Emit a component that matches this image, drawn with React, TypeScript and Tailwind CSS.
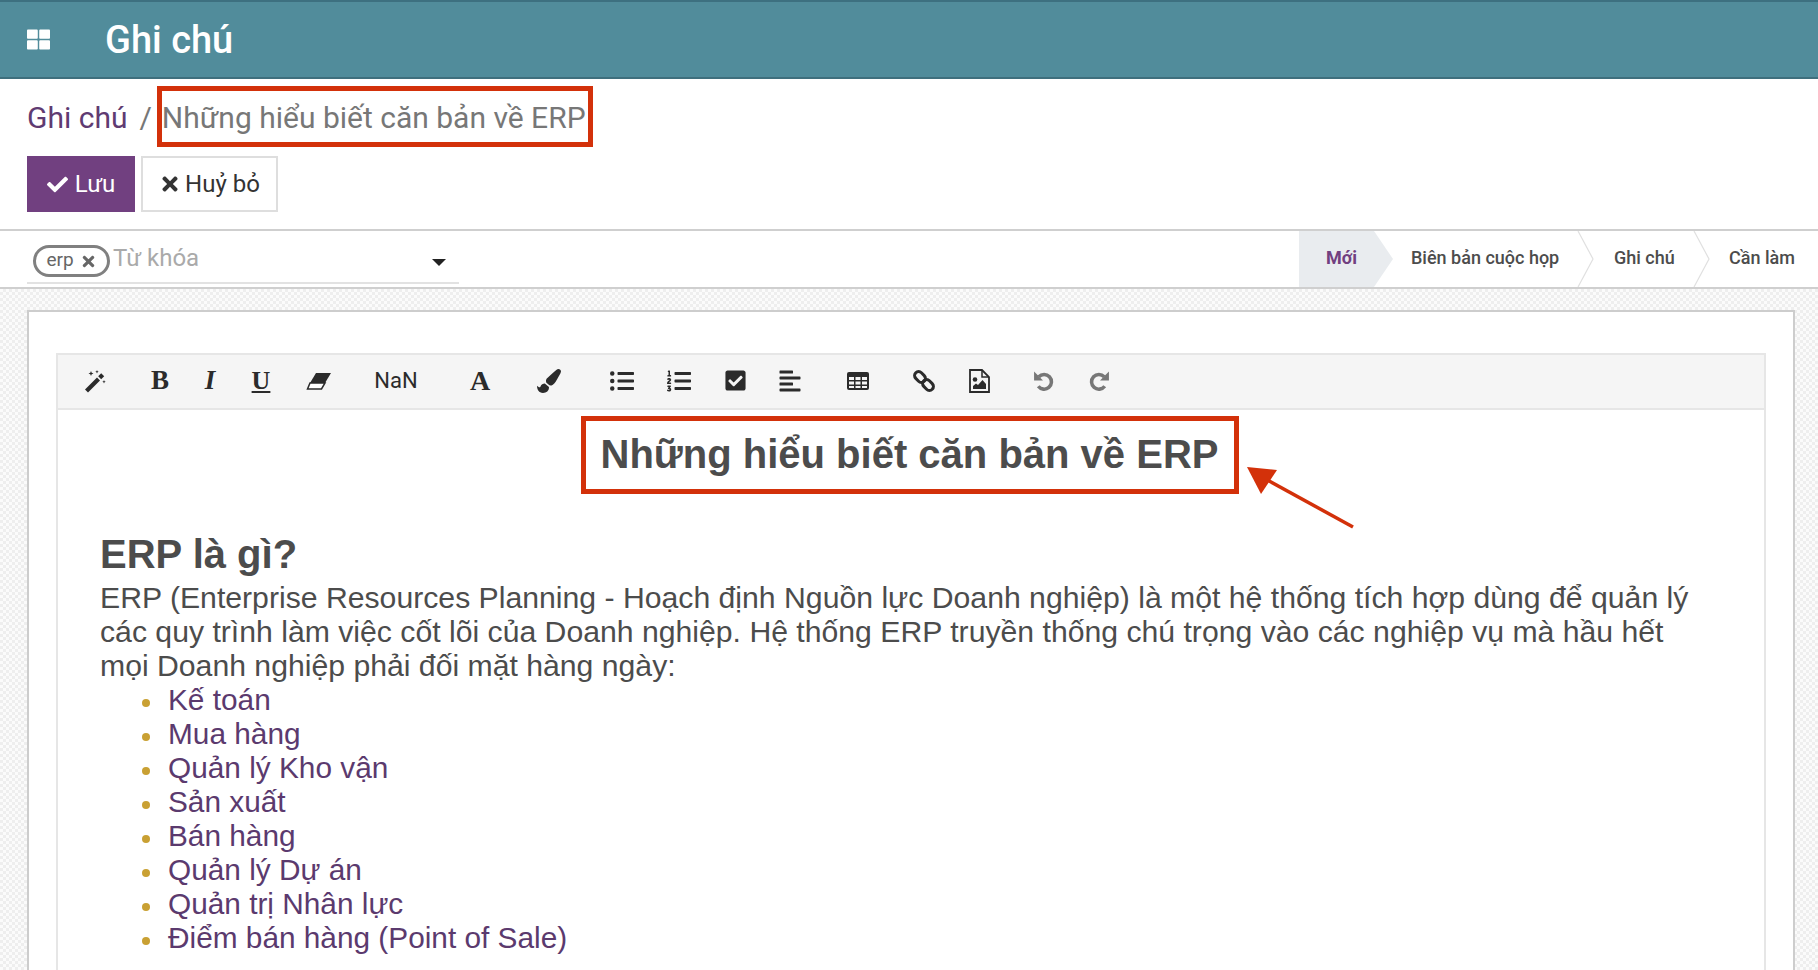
import {
  FaAlignLeft,
  FaCheck,
  FaCheckSquare,
  FaListOl,
  FaListUl,
  FaPaintBrush,
  FaThLarge,
  FaTimes,
} from "react-icons/fa";

function Wand() {
  return (
    <svg width="24" height="24" viewBox="0 0 24 24" fill="#2b2b2b" stroke="none">
      <path d="M2 20.500 14 8.500l3 3-12 12z" />
      <path d="M15.200 7.300l3-3 3 3-3 3z" />
      <path d="M8 2l.7 1.800L10.500 4.500l-1.800.7L8 7l-.7-1.800L5.500 4.500l1.800-.7z" />
      <path d="M14 1l.5 1.200 1.200.5-1.200.5-.5 1.200-.5-1.200-1.200-.5 1.200-.5z" />
      <path d="M21 11l.5 1.200 1.200.5-1.200.5-.5 1.200-.5-1.200-1.200-.5 1.200-.5z" />
    </svg>
  );
}

function Eraser() {
  return (
    <svg width="26" height="22" viewBox="0 0 26 22">
      <path d="M10 3h15l-6 10H4z" fill="#2b2b2b" />
      <path d="M4 13h15l-3.500 6H1.500z" fill="#fff" stroke="#2b2b2b" strokeWidth="1.500" />
    </svg>
  );
}

function Chain() {
  return (
    <svg width="24" height="24" viewBox="0 0 24 24" fill="none" stroke="#2b2b2b" strokeWidth="3">
      <rect x="2" y="4" width="12" height="8" rx="4" transform="rotate(45 8 8)" />
      <rect x="10" y="12" width="12" height="8" rx="4" transform="rotate(45 16 16)" />
    </svg>
  );
}

function TableIcon() {
  return (
    <svg width="22" height="18" viewBox="0 0 22 18">
      <rect x="0" y="0" width="22" height="18" rx="2" fill="#2b2b2b" />
      <path d="M2 5h5v3H2zM8.500 5h5v3h-5zM15 5h5v3h-5zM2 9.500h5v3H2zM8.500 9.500h5v3h-5zM15 9.500h5v3h-5zM2 14h5v2H2zM8.500 14h5v2h-5zM15 14h5v2h-5z" fill="#f5f5f5" />
    </svg>
  );
}

function FileImage() {
  return (
    <svg width="21" height="24" viewBox="0 0 21 24" fill="none">
      <path d="M1 1h12l7 7v15H1z" stroke="#2b2b2b" strokeWidth="1.800" />
      <path d="M13 1v7h7" stroke="#2b2b2b" strokeWidth="1.500" />
      <circle cx="6" cy="10.500" r="2.300" fill="#2b2b2b" />
      <path d="M4 20v-3l3-2.500 2 1.500 4.500-5 3.500 4v5z" fill="#2b2b2b" />
    </svg>
  );
}

function UndoArrow() {
  return (
    <svg width="23" height="23" viewBox="0 0 22 22" fill="none">
      <path d="M6.500 7.500A7 7 0 1 1 6 16.500" stroke="#777" strokeWidth="3.400" />
      <polygon points="2,2.500 2,11 10.500,11" fill="#777" />
    </svg>
  );
}

const tools = [
  { key: "wand", el: <Wand />, cls: "ml-0" },
  { key: "bold", el: <span className="font-['Liberation_Serif',serif] font-bold text-[27px]">B</span>, cls: "ml-[25px]" },
  { key: "italic", el: <span className="font-['Liberation_Serif',serif] font-bold italic text-[27px]">I</span>, cls: "ml-[10px]" },
  { key: "underline", el: <span className="font-['Liberation_Serif',serif] font-bold text-[26px] underline">U</span>, cls: "ml-[11px]" },
  { key: "eraser", el: <Eraser />, cls: "ml-[18px]" },
  { key: "size", el: <span className="text-[22px]">NaN</span>, cls: "ml-[37px]" },
  { key: "font", el: <span className="font-['Liberation_Serif',serif] font-bold text-[28px]">A</span>, cls: "ml-[44px]" },
  { key: "brush", el: <FaPaintBrush className="text-[24px]" />, cls: "ml-[29px]" },
  { key: "ul", el: <FaListUl className="text-[24px]" />, cls: "ml-[33px]" },
  { key: "ol", el: <FaListOl className="text-[24px]" />, cls: "ml-[17px]" },
  { key: "check", el: <FaCheckSquare className="text-[23px]" />, cls: "ml-[16px]" },
  { key: "align", el: <FaAlignLeft className="text-[24px]" />, cls: "ml-[15px]" },
  { key: "table", el: <TableIcon />, cls: "ml-[28px]" },
  { key: "link", el: <Chain />, cls: "ml-[26px]" },
  { key: "image", el: <FileImage />, cls: "ml-[15px]" },
  { key: "undo", el: <UndoArrow />, cls: "ml-[24px]" },
  { key: "redo", el: <span className="scale-x-[-1]"><UndoArrow /></span>, cls: "ml-[16px]" },
];

const modules = [
  "Kế toán",
  "Mua hàng",
  "Quản lý Kho vận",
  "Sản xuất",
  "Bán hàng",
  "Quản lý Dự án",
  "Quản trị Nhân lực",
  "Điểm bán hàng (Point of Sale)",
];

function Chevron() {
  return (
    <svg width="17" height="56" viewBox="0 0 17 56" className="absolute right-0 top-0" fill="none" stroke="#e0e0e0" strokeWidth="1.200">
      <polyline points="1,0 16,28 1,56" />
    </svg>
  );
}

export default function App() {
  return (
    <div className="relative h-[970px] overflow-hidden bg-white font-['Roboto',sans-serif] flex flex-col">
      <header className="h-[79px] shrink-0 bg-[#518c9b] border-t-2 border-b-2 border-t-[#3d7080] border-b-[#3f6f7d] flex items-center pl-[27px]">
        <FaThLarge className="text-white text-[23px]" />
        <h1 className="ml-[55px] mt-[2px] text-white text-[38px] font-medium">Ghi chú</h1>
      </header>

      <div className="h-[150px] shrink-0 pl-[27px] pt-[7px]">
        <div className="flex items-center text-[30px] h-[61px]">
          <span className="text-[#5f3b72] mt-[2px]">Ghi chú</span>
          <span className="ml-[12px] text-[#777] mt-[2px]">/</span>
          <span className="ml-[5px] h-[61px] flex items-center pr-[2px] border-[5px] border-[#d3310a] text-[#777]">
            <span className="mt-[2px]">Những hiểu biết căn bản về ERP</span>
          </span>
        </div>
        <div className="flex gap-[6px] mt-[9px]">
          <button className="w-[108px] h-[56px] bg-[#714080] text-white text-[24px] flex items-center justify-center gap-[7px]">
            <FaCheck className="text-[21px]" />
            Lưu
          </button>
          <button className="w-[137px] h-[56px] border-2 border-[#dedede] text-[#333] text-[24px] flex items-center justify-center gap-[4px]">
            <FaTimes className="text-[22px]" />
            Huỷ bỏ
          </button>
        </div>
      </div>

      <div className="h-[60px] shrink-0 border-t-2 border-b-2 border-[#cfcfcf] flex justify-between">
        <div className="ml-[27px] w-[432px] h-[53px] border-b-2 border-[#e2e2e2] flex items-center relative">
          <span className="ml-[6px] w-[77px] h-[32px] mt-[8px] rounded-full border-[3px] border-[#808080] text-[#666] text-[19px] flex items-center justify-center gap-[6px]">
            erp
            <FaTimes className="text-[17px] mt-[2px]" />
          </span>
          <span className="ml-[3px] text-[24px] text-[#aaa] mt-[2px]">Từ khóa</span>
          <span className="absolute right-[13px] top-[28px] border-x-[7px] border-t-[7px] border-x-transparent border-t-[#222]" />
        </div>
        <div className="flex text-[18px] font-medium text-[#4c4c4c]">
          <div className="relative w-[94px] bg-[#e9ecef] [clip-path:polygon(0_0,75px_0,94px_50%,75px_100%,0_100%)] flex items-center pl-[27px] pb-[4px] text-[#714080] font-bold">Mới</div>
          <div className="relative w-[201px] flex items-center pl-[18px] pb-[4px]">
            Biên bản cuộc họp
            <Chevron />
          </div>
          <div className="relative w-[116px] flex items-center pl-[20px] pb-[4px]">
            Ghi chú
            <Chevron />
          </div>
          <div className="w-[108px] flex items-center pl-[19px] pb-[4px]">Cần làm</div>
        </div>
      </div>

      <main className="flex-1 min-h-0 pt-[21px] pl-[27px] pr-[23px] bg-[#f3f3f3] bg-[repeating-conic-gradient(#eeeeee_0_25%,#fbfbfb_0_50%)] bg-[length:6px_6px]">
        <div className="h-full bg-white border-2 border-b-0 border-[#cdcdcd] pt-[41px] px-[27px]">
          <div className="h-full border-x-2 border-[#e6e6e6] flex flex-col">
            <div className="h-[57px] shrink-0 -mx-[2px] bg-[#f5f5f5] border-2 border-[#e6e6e6] flex items-center pl-[17px] pb-[2px] text-[20px] text-[#2b2b2b]">
              {tools.map((t) => (
                <span key={t.key} className={`w-[40px] flex justify-center ${t.cls}`}>
                  {t.el}
                </span>
              ))}
            </div>
            <div className="pl-[42px] font-['Liberation_Sans',sans-serif] text-[#4c4c4c] text-[30.2px] leading-[34px] whitespace-nowrap">
              <div className="flex justify-center mt-[6px] mb-[38px] pr-[45px]">
                <h2 className="h-[78px] w-[658px] border-[5px] border-[#d3310a] flex items-center justify-center pb-[2px] text-[40px] font-bold">
                  Những hiểu biết căn bản về ERP
                </h2>
              </div>
              <h3 className="text-[40px] font-bold leading-[44px] mb-[5px]">ERP là gì?</h3>
              <p>
                ERP (Enterprise Resources Planning - Hoạch định Nguồn lực Doanh nghiệp) là một hệ thống tích hợp dùng để quản lý
                <br />
                các quy trình làm việc cốt lõi của Doanh nghiệp. Hệ thống ERP truyền thống chú trọng vào các nghiệp vụ mà hầu hết
                <br />
                mọi Doanh nghiệp phải đối mặt hàng ngày:
              </p>
              <ul className="pl-[42px] text-[29.8px] text-[#5b3a6e]">
                {modules.map((m) => (
                  <li key={m} className="flex items-center">
                    <span className="w-[8px] h-[8px] mt-[6px] mr-[18px] rounded-full bg-[#c9a033]" />
                    {m}
                  </li>
                ))}
              </ul>
            </div>
          </div>
        </div>
      </main>

      <svg className="absolute left-[1240px] top-[460px]" width="125" height="75" viewBox="0 0 125 75">
        <line x1="113" y1="67" x2="20" y2="16" stroke="#d3310a" strokeWidth="3.500" />
        <polygon points="7,7 37,10 21,34" fill="#d3310a" />
      </svg>
    </div>
  );
}
